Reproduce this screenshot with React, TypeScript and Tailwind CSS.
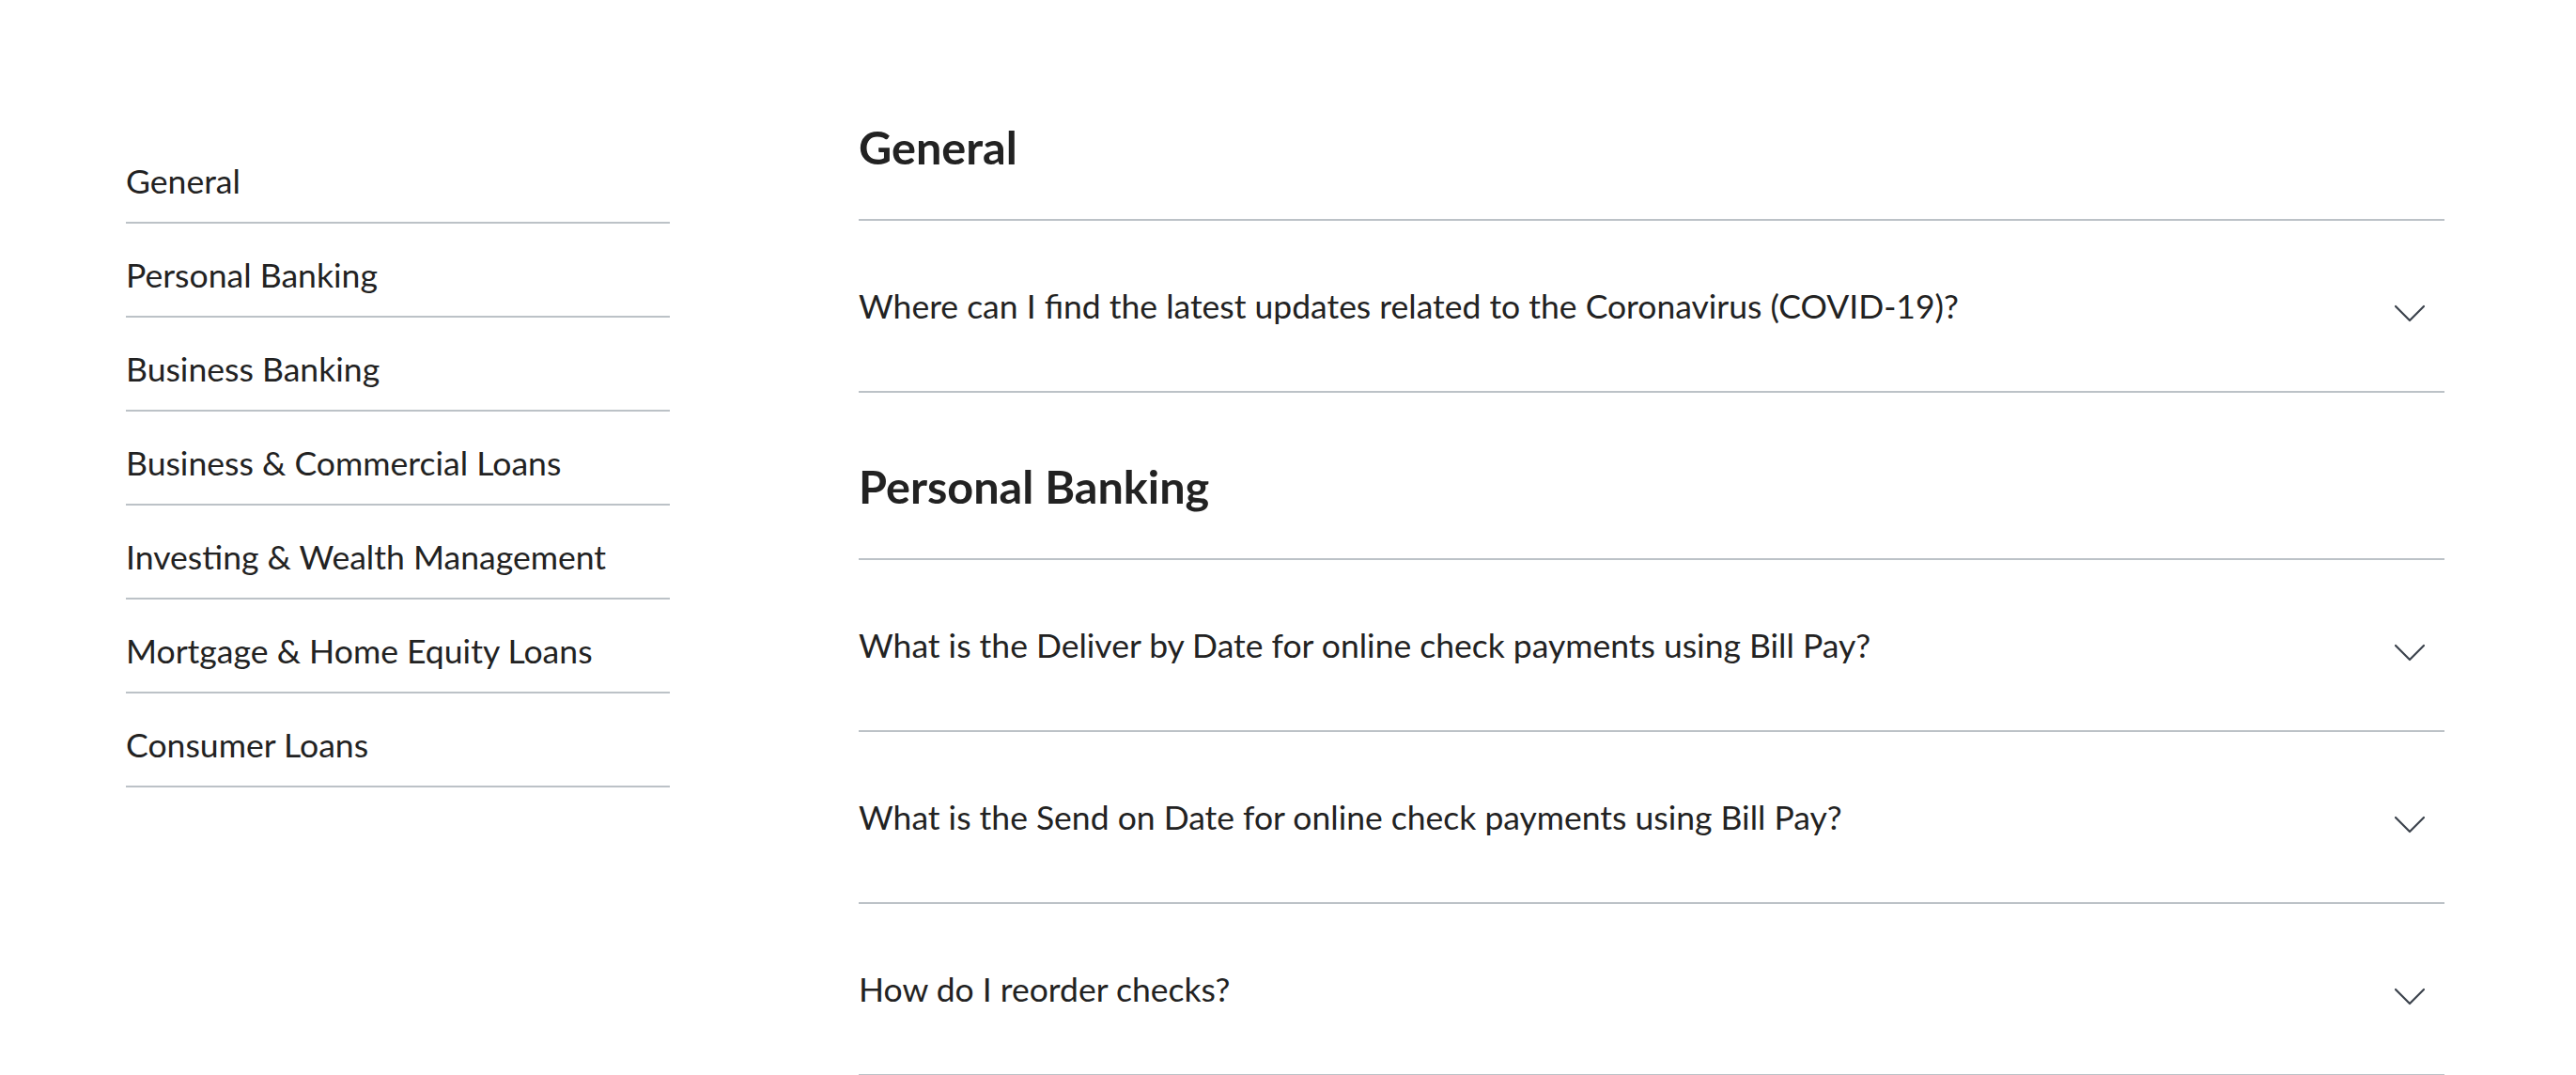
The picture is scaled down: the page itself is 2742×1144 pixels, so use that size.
const navItems = [
  "General",
  "Personal Banking",
  "Business Banking",
  "Business & Commercial Loans",
  "Investing & Wealth Management",
  "Mortgage & Home Equity Loans",
  "Consumer Loans",
];

const sections = [
  {
    title: "General",
    questions: [
      "Where can I find the latest updates related to the Coronavirus (COVID-19)?",
    ],
  },
  {
    title: "Personal Banking",
    questions: [
      "What is the Deliver by Date for online check payments using Bill Pay?",
      "What is the Send on Date for online check payments using Bill Pay?",
      "How do I reorder checks?",
    ],
  },
];

const Chevron = () => (
  <svg
    width="34"
    height="19"
    viewBox="0 0 34 19"
    fill="none"
    stroke="#3c434d"
    strokeWidth="2.2"
    strokeLinecap="round"
    strokeLinejoin="round"
    className="shrink-0"
  >
    <path d="M2 2l15 15 15-15" />
  </svg>
);

const App = () => {
  return (
    <div
      className="flex min-h-[1144px] w-full bg-white pl-[134px] pr-[140px] text-[#222222]"
      style={{ fontFamily: "Lato, 'Open Sans', sans-serif" }}
    >
      {/* Side nav */}
      <nav className="w-[579px] shrink-0 pt-[138px]">
        <ul>
          {navItems.map((item) => (
            <li
              key={item}
              className="border-b-2 border-[#bcc2c7] pb-[16px] pt-[28px] text-[35.6px] leading-[54px]"
            >
              {item}
            </li>
          ))}
        </ul>
      </nav>

      {/* FAQ list */}
      <main className="ml-[201px] flex-1 pt-[57px]">
        {sections.map((section) => (
          <section key={section.title}>
            <h2 className="border-b-2 border-[#bcc2c7] pb-[48px] pt-[70px] text-[48.6px] font-bold leading-[58px]">
              {section.title}
            </h2>
            {section.questions.map((q) => (
              <div
                key={q}
                className="flex items-center justify-between border-b-2 border-[#bcc2c7] pb-[63px] pt-[64px] pr-[20px]"
              >
                <span className="text-[35.5px] leading-[54px]">{q}</span>
                <div className="mt-[14px]">
                  <Chevron />
                </div>
              </div>
            ))}
          </section>
        ))}
      </main>
    </div>
  );
};

export default App;
